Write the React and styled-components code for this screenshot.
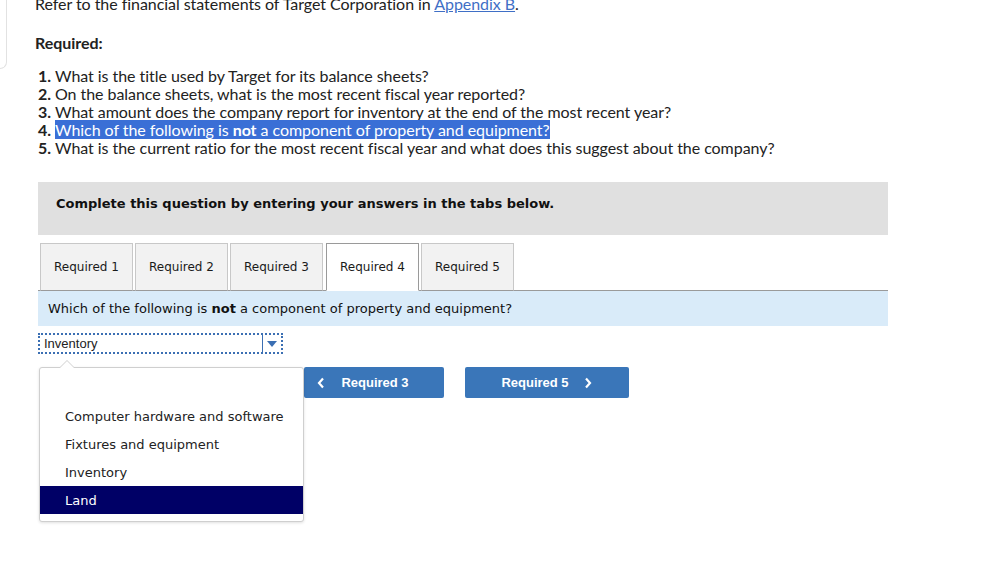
import React from 'react';
import styled, { createGlobalStyle } from 'styled-components';

const GlobalStyle = createGlobalStyle`
  html, body {
    margin: 0;
    padding: 0;
    background: #fff;
  }
  body {
    font-family: Lato, "Open Sans", sans-serif;
    color: #222;
    overflow: hidden;
  }
`;

const Page = styled.div`
  width: 991px;
  height: 567px;
  position: relative;
`;

const TopRow = styled.div`
  display: flex;
  align-items: flex-start;
`;

const PrevPanelEdge = styled.div`
  width: 6px;
  height: 68px;
  flex: none;
  border-right: 1px solid #e2e2e2;
  border-bottom: 1px solid #e2e2e2;
  border-bottom-right-radius: 7px;
`;

const Intro = styled.div`
  margin-left: 28px;
  font-size: 16px;
  line-height: 18px;
  letter-spacing: -0.05px;
`;

const IntroText = styled.p`
  margin: -5px 0 0;
`;

const Link = styled.a`
  color: #3f6fc6;
  text-decoration: underline;
`;

const Heading = styled.h3`
  margin: 21px 0 0;
  font-size: 16px;
  font-weight: 700;
  line-height: 18px;
`;

const QuestionList = styled.ol`
  list-style: none;
  margin: 15px 0 0 3px;
  padding: 0;
`;

const QuestionItem = styled.li`
  line-height: 18px;
  white-space: nowrap;
`;

const Num = styled.b`
  font-weight: 700;
  margin-right: 4px;
`;

const Selected = styled.span`
  background: #3a6fd6;
  color: #fff;
`;

const Workspace = styled.div`
  margin: 25px 0 0 38px;
  width: 850px;
  font-family: "DejaVu Sans", Verdana, sans-serif;
`;

const Banner = styled.div`
  background: #e0e0e0;
  padding: 14px 18px 23px;
  font-size: 13px;
  font-weight: 700;
  line-height: 16px;
  color: #111;
`;

const TabBar = styled.div`
  display: flex;
  gap: 2px;
  margin-top: 8px;
  padding-left: 2px;
  border-bottom: 1px solid #9a9a9a;
`;

const Tab = styled.div`
  width: 91px;
  height: 46px;
  margin-bottom: -1px;
  margin-left: ${p => (p.$active ? 1 : 0)}px;
  display: flex;
  align-items: center;
  justify-content: center;
  font-size: 12px;
  color: #1a1a1a;
  background: ${p => (p.$active ? '#fff' : '#f2f2f2')};
  border: 1px solid ${p => (p.$active ? '#9a9a9a' : '#c8c8c8')};
  border-bottom: 1px solid ${p => (p.$active ? '#fff' : '#9a9a9a')};
`;

const Prompt = styled.div`
  background: #d9ebf9;
  height: 35px;
  padding-left: 10px;
  display: flex;
  align-items: center;
  font-size: 13px;
  color: #111;
`;

const SelectWrap = styled.div`
  position: relative;
  margin-top: 7px;
  width: 245px;
`;

const SelectBox = styled.div`
  box-sizing: border-box;
  height: 21px;
  border: 2px dotted #3b6fb3;
  display: flex;
  align-items: center;
  font-family: "Liberation Sans", Arial, sans-serif;
  font-size: 13px;
  color: #222;
`;

const SelectValue = styled.span`
  flex: 1;
  padding-left: 4px;
`;

const SelectArrow = styled.span`
  width: 18px;
  height: 100%;
  border-left: 1px solid #3b6fb3;
  display: flex;
  align-items: center;
  justify-content: center;
`;

const Menu = styled.div`
  position: absolute;
  top: 34px;
  left: 1px;
  width: 265px;
  box-sizing: border-box;
  background: #fff;
  border: 1px solid #cfcfcf;
  border-radius: 3px;
  box-shadow: 0 1px 3px rgba(0, 0, 0, 0.12);
  padding: 6px 0 7px;
  z-index: 2;

  &::before,
  &::after {
    content: '';
    position: absolute;
    left: 20px;
    border: 7px solid transparent;
  }
  &::before {
    top: -15px;
    border-bottom-color: #cfcfcf;
  }
  &::after {
    top: -14px;
    border-bottom-color: #fff;
  }
`;

const Option = styled.div`
  height: 28px;
  padding-left: 25px;
  display: flex;
  align-items: center;
  font-size: 13px;
  color: ${p => (p.$active ? '#fff' : '#222')};
  background: ${p => (p.$active ? '#000066' : 'transparent')};
`;

const NavRow = styled.div`
  display: flex;
  justify-content: center;
  gap: 21px;
  margin-top: 13px;
  padding-left: 6px;
`;

const NavButton = styled.button`
  box-sizing: border-box;
  width: ${p => p.$w}px;
  height: 31px;
  border: none;
  border-radius: 2px;
  background: #3a76b9;
  color: #fff;
  font-family: "Liberation Sans", Arial, sans-serif;
  font-weight: 700;
  font-size: 13px;
  display: flex;
  align-items: center;
  justify-content: center;
  gap: ${p => p.$gap}px;
  padding: 0 ${p => p.$pr || 0}px 0 0;
  cursor: pointer;
`;

const Chevron = ({ dir }) => (
  <svg width="8" height="12" viewBox="0 0 8 12">
    <path
      d={dir === 'left' ? 'M6 1.5 L2 6 L6 10.5' : 'M2 1.5 L6 6 L2 10.5'}
      fill="none"
      stroke="#fff"
      strokeWidth="2.2"
    />
  </svg>
);

const questions = [
  'What is the title used by Target for its balance sheets?',
  'On the balance sheets, what is the most recent fiscal year reported?',
  'What amount does the company report for inventory at the end of the most recent year?',
  null,
  'What is the current ratio for the most recent fiscal year and what does this suggest about the company?',
];

const tabs = ['Required 1', 'Required 2', 'Required 3', 'Required 4', 'Required 5'];
const options = ['', 'Computer hardware and software', 'Fixtures and equipment', 'Inventory', 'Land'];

export default function App() {
  return (
    <Page>
      <GlobalStyle />
      <TopRow>
        <PrevPanelEdge />
        <Intro>
          <IntroText>
            Refer to the financial statements of Target Corporation in <Link href="#">Appendix B</Link>.
          </IntroText>
          <Heading>Required:</Heading>
          <QuestionList>
            {questions.map((q, i) => (
              <QuestionItem key={i}>
                <Num>{i + 1}.</Num>
                {q === null ? (
                  <Selected>
                    Which of the following is <b>not</b> a component of property and equipment?
                  </Selected>
                ) : (
                  q
                )}
              </QuestionItem>
            ))}
          </QuestionList>
        </Intro>
      </TopRow>

      <Workspace>
        <Banner>Complete this question by entering your answers in the tabs below.</Banner>
        <TabBar>
          {tabs.map((t, i) => (
            <Tab key={t} $active={i === 3}>{t}</Tab>
          ))}
        </TabBar>
        <Prompt>
          <span>
            Which of the following is <b>not</b> a component of property and equipment?
          </span>
        </Prompt>
        <SelectWrap>
          <SelectBox>
            <SelectValue>Inventory</SelectValue>
            <SelectArrow>
              <svg width="10" height="6" viewBox="0 0 10 6">
                <path d="M0 0 H10 L5 6 Z" fill="#3b6fb3" />
              </svg>
            </SelectArrow>
          </SelectBox>
          <Menu>
            {options.map((o, i) => (
              <Option key={i} $active={o === 'Land'}>{o}</Option>
            ))}
          </Menu>
        </SelectWrap>
        <NavRow>
          <NavButton $w={140} $gap={16} $pr={21}>
            <Chevron dir="left" />
            <span>Required 3</span>
          </NavButton>
          <NavButton $w={164} $gap={15}>
            <span>Required 5</span>
            <Chevron dir="right" />
          </NavButton>
        </NavRow>
      </Workspace>
    </Page>
  );
}
